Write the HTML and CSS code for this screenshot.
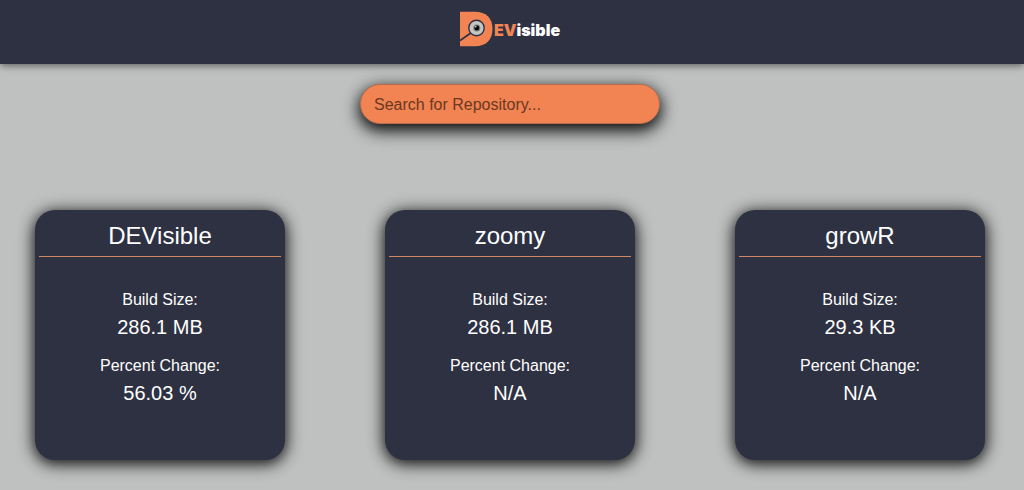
FILE: index.html
```html
<!DOCTYPE html>
<html lang="en">
<head>
<meta charset="utf-8">
<meta name="viewport" content="width=device-width, initial-scale=1">
<title>DEVisible</title>
<link rel="stylesheet" href="styles.css">
</head>
<body>
<header class="topbar">
  <a class="brand" href="#" aria-label="DEVisible">
    <svg class="brand-mark" viewBox="0 0 33 36" aria-hidden="true">
      <path d="M0 0.800H15C26 0.800 32.500 7 32.500 18C32.500 29 26 35.200 15 35.200H0Z" fill="#f18452"/>
      <path d="M0 29.500L11.500 21.500" stroke="#2e3142" stroke-width="1.800"/>
      <circle cx="16.500" cy="17" r="7.700" fill="#c3c6c4" stroke="#2e3142" stroke-width="1.400"/>
      <circle cx="16.800" cy="17" r="3.500" fill="#777c7b"/>
      <circle cx="16.800" cy="17" r="2.400" fill="#050505"/>
      <circle cx="15.800" cy="15.800" r="0.800" fill="#fff"/>
    </svg>
    <span class="brand-name"><span class="brand-accent">EV</span>isible</span>
  </a>
</header>
<main class="page">
  <form class="search">
    <input class="search-input" type="text" aria-label="Search for Repository" placeholder="Search for Repository...">
  </form>
  <section class="cards">
    <article class="card">
      <h2 class="card-title">DEVisible</h2>
      <dl class="stats">
        <dt>Build Size:</dt><dd>286.1 MB</dd>
        <dt>Percent Change:</dt><dd>56.03 %</dd>
      </dl>
    </article>
    <article class="card">
      <h2 class="card-title">zoomy</h2>
      <dl class="stats">
        <dt>Build Size:</dt><dd>286.1 MB</dd>
        <dt>Percent Change:</dt><dd>N/A</dd>
      </dl>
    </article>
    <article class="card">
      <h2 class="card-title">growR</h2>
      <dl class="stats">
        <dt>Build Size:</dt><dd>29.3 KB</dd>
        <dt>Percent Change:</dt><dd>N/A</dd>
      </dl>
    </article>
  </section>
</main>
</body>
</html>
```
FILE: styles.css
```css
* { box-sizing: border-box; }
body {
  margin: 0;
  background: #bfc1c0;
  color: #fff;
  font-family: "Liberation Sans", Arial, sans-serif;
}
.topbar {
  display: flex;
  justify-content: center;
  padding: 11px 4px 17px 0;
  background: #2e3142;
  box-shadow: 0 1px 8px rgba(0, 0, 0, 0.6);
}
.brand {
  display: flex;
  align-items: center;
  gap: 1px;
  color: #fff;
  text-decoration: none;
}
.brand-mark {
  display: block;
  width: 33px;
  height: 36px;
}
.brand-name {
  padding-top: 2px;
  font: 900 16px/20px Inter, sans-serif;
}
.brand-accent { color: #f18452; }
.page { padding: 20px 4px 30px 0; }
.search {
  display: flex;
  justify-content: center;
}
.search-input {
  width: 300px;
  height: 40px;
  padding: 2px 13px 0;
  border: 1px solid #b96c4b;
  border-radius: 20px;
  outline: none;
  background: #f18452;
  color: #2e3142;
  font: 16px "Liberation Sans", Arial, sans-serif;
  box-shadow: 0 5px 15px rgba(0, 0, 0, 0.9), 0 6px 20px rgba(0, 0, 0, 0.4);
}
.search-input::placeholder {
  color: #6b3821;
  opacity: 1;
}
.cards {
  display: flex;
  flex-wrap: wrap;
  justify-content: center;
  gap: 60px 100px;
  margin-top: 86px;
}
.card {
  width: 250px;
  min-height: 250px;
  padding: 4px;
  border-radius: 20px;
  background: #2e3142;
  text-align: center;
  box-shadow: 0 3px 15px rgba(0, 0, 0, 0.9), 0 2px 20px rgba(0, 0, 0, 0.3);
}
.card-title {
  margin: 0;
  padding: 7px 0 5px;
  border-bottom: 1px solid #d18766;
  font-size: 24px;
  font-weight: 400;
  line-height: 30px;
}
.stats { margin: 33px 0 0; }
.stats dt {
  font-size: 16px;
  line-height: 20px;
}
.stats dd {
  margin: 3px 0 15px;
  font-size: 20px;
  line-height: 28px;
}
```
